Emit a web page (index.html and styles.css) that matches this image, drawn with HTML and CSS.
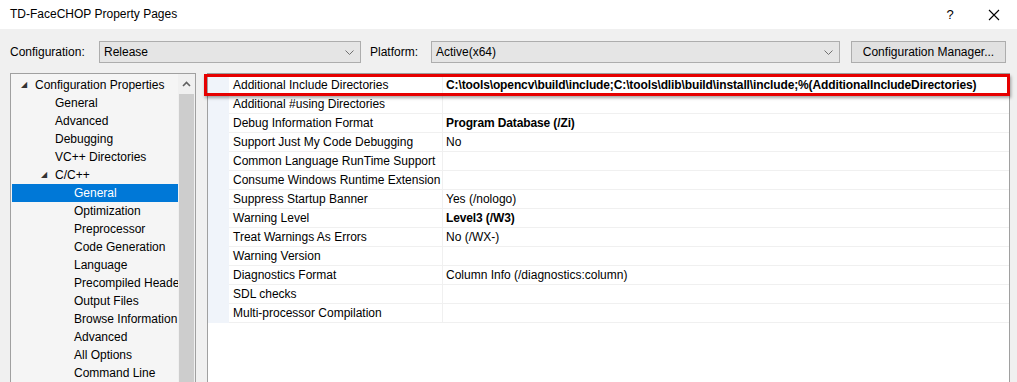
FILE: index.html
```html
<!DOCTYPE html>
<html lang="en">
<head>
    <meta charset="UTF-8">
    <title>TD-FaceCHOP Property Pages</title>
    <link rel="stylesheet" href="styles.css">
</head>
<body>
<div class="window">
    <!-- Title bar -->
    <div class="titlebar">
        <span class="title">TD-FaceCHOP Property Pages</span>
        <span class="help">?</span>
        <span class="close">
            <svg width="12" height="12" viewBox="0 0 12 12"><path d="M1 1 L11 11 M11 1 L1 11" stroke="#000" stroke-width="1.1"/></svg>
        </span>
    </div>

    <!-- Configuration row -->
    <div class="toolbar">
        <label class="lbl lbl-config">Configuration:</label>
        <div class="combo combo-config">
            <span>Release</span>
            <svg class="chev" width="9" height="5" viewBox="0 0 9 5"><path d="M0.5 0.5 L4.5 4.5 L8.5 0.5" fill="none" stroke="#707070" stroke-width="1"/></svg>
        </div>
        <label class="lbl lbl-platform">Platform:</label>
        <div class="combo combo-platform">
            <span>Active(x64)</span>
            <svg class="chev" width="9" height="5" viewBox="0 0 9 5"><path d="M0.5 0.5 L4.5 4.5 L8.5 0.5" fill="none" stroke="#707070" stroke-width="1"/></svg>
        </div>
        <button class="btn-manager">Configuration Manager...</button>
    </div>

    <div class="main">
        <!-- Tree -->
        <div class="tree">
            <div class="tree-items">
                <div class="node lvl0"><span class="tri">&#9698;</span>Configuration Properties</div>
                <div class="node lvl1">General</div>
                <div class="node lvl1">Advanced</div>
                <div class="node lvl1">Debugging</div>
                <div class="node lvl1">VC++ Directories</div>
                <div class="node lvl1 has-tri"><span class="tri">&#9698;</span>C/C++</div>
                <div class="node lvl2 selected">General</div>
                <div class="node lvl2">Optimization</div>
                <div class="node lvl2">Preprocessor</div>
                <div class="node lvl2">Code Generation</div>
                <div class="node lvl2">Language</div>
                <div class="node lvl2">Precompiled Headers</div>
                <div class="node lvl2">Output Files</div>
                <div class="node lvl2">Browse Information</div>
                <div class="node lvl2">Advanced</div>
                <div class="node lvl2">All Options</div>
                <div class="node lvl2">Command Line</div>
            </div>
            <div class="scrollbar">
                <div class="scroll-up">
                    <svg width="9" height="6" viewBox="0 0 9 6"><path d="M1 5 L4.5 1.5 L8 5" fill="none" stroke="#606060" stroke-width="1.6"/></svg>
                </div>
                <div class="thumb"></div>
            </div>
        </div>

        <!-- Property grid -->
        <div class="grid">
            <div class="rows">
                <div class="row"><div class="gutter"></div><div class="name">Additional Include Directories</div><div class="value bold">C:\tools\opencv\build\include;C:\tools\dlib\build\install\include;%(AdditionalIncludeDirectories)</div></div>
                <div class="row"><div class="gutter"></div><div class="name">Additional #using Directories</div><div class="value"></div></div>
                <div class="row"><div class="gutter"></div><div class="name">Debug Information Format</div><div class="value bold">Program Database (/Zi)</div></div>
                <div class="row"><div class="gutter"></div><div class="name">Support Just My Code Debugging</div><div class="value">No</div></div>
                <div class="row"><div class="gutter"></div><div class="name">Common Language RunTime Support</div><div class="value"></div></div>
                <div class="row"><div class="gutter"></div><div class="name">Consume Windows Runtime Extension</div><div class="value"></div></div>
                <div class="row"><div class="gutter"></div><div class="name">Suppress Startup Banner</div><div class="value">Yes (/nologo)</div></div>
                <div class="row"><div class="gutter"></div><div class="name">Warning Level</div><div class="value bold">Level3 (/W3)</div></div>
                <div class="row"><div class="gutter"></div><div class="name">Treat Warnings As Errors</div><div class="value">No (/WX-)</div></div>
                <div class="row"><div class="gutter"></div><div class="name">Warning Version</div><div class="value"></div></div>
                <div class="row"><div class="gutter"></div><div class="name">Diagnostics Format</div><div class="value">Column Info (/diagnostics:column)</div></div>
                <div class="row"><div class="gutter"></div><div class="name">SDL checks</div><div class="value"></div></div>
                <div class="row"><div class="gutter"></div><div class="name">Multi-processor Compilation</div><div class="value"></div></div>
            </div>
            <!-- highlight drawn over the first row -->
            <div class="highlight"></div>
        </div>
    </div>
</div>
</body>
</html>
```

FILE: styles.css
```css
/* Page */
body {
    margin: 0;
    background: #f0f0f0;
    font-family: "Liberation Sans", Arial, sans-serif;
    font-size: 12px;
    color: #000;
    overflow: hidden;
}

.window {
    width: 1017px;
    height: 382px;
    overflow: hidden;
}

/* Title bar */
.titlebar {
    height: 29px;
    background: #fff;
    display: flex;
    align-items: center;
    padding-left: 10px;
}

.title {
    flex: 1;
    font-size: 12px;
    margin-top: -2px;
}

.help {
    width: 42px;
    font-size: 13px;
    text-align: center;
    margin-right: 2px;
}

.close {
    width: 42px;
    display: flex;
    justify-content: center;
    margin-right: 2px;
}

/* Configuration row */
.toolbar {
    display: flex;
    align-items: center;
    height: 22px;
    margin-top: 12px;
    padding-left: 10px;
}

.lbl-config {
    width: 89px;
}

.lbl-platform {
    width: 61px;
    margin-left: 9px;
}

.combo {
    background: #e5e5e5;
    border: 1px solid #adadad;
    display: flex;
    align-items: center;
    justify-content: space-between;
    padding: 0 6px 0 4px;
    box-sizing: border-box;
    height: 22px;
}

.combo-config {
    width: 262px;
}

.combo-platform {
    width: 409px;
}

.btn-manager {
    margin-left: 11px;
    width: 155px;
    height: 22px;
    background: #e1e1e1;
    border: 1px solid #adadad;
    font-family: inherit;
    font-size: 12px;
    padding: 0;
    color: #000;
}

/* Main panels */
.main {
    display: flex;
    margin-top: 10px;
    padding-left: 10px;
    height: 320px;
}

/* Tree */
.tree {
    width: 186px;
    box-sizing: border-box;
    border: 1px solid #a0a0a0;
    border-bottom: none;
    background: #f5f5f5;
    display: flex;
}

.tree-items {
    flex: 1;
    padding-top: 2px;
    padding-left: 1px;
    overflow: hidden;
    white-space: nowrap;
}

.node {
    height: 18px;
    line-height: 18px;
    overflow: hidden;
}

.lvl0 { padding-left: 9px; }
.lvl1 { padding-left: 43px; }
.lvl1.has-tri { padding-left: 29px; }
.lvl2 { padding-left: 62px; }

.tri {
    display: inline-block;
    width: 14px;
    font-size: 8px;
    color: #333;
    vertical-align: top;
}

.selected {
    background: #0078d7;
    color: #fff;
}

.scrollbar {
    width: 17px;
    background: #f0f0f0;
    display: flex;
    flex-direction: column;
}

.scroll-up {
    height: 20px;
    display: flex;
    align-items: center;
    justify-content: center;
}

.thumb {
    flex: 1;
    margin: 0 1px;
    background: #cdcdcd;
}

/* Property grid */
.grid {
    position: relative;
    margin-left: 11px;
    width: 801px;
    border: 1px solid #a0a0a0;
    border-bottom: none;
    background: #fff;
}

.rows {
    padding-top: 2px;
}

.row {
    display: flex;
    height: 19px;
    line-height: 18px;
    white-space: nowrap;
}

.gutter {
    width: 21px;
    background: #f0f4fa;
}

.name {
    width: 214px;
    padding-left: 4px;
    box-sizing: border-box;
    border-right: 1px solid #f0f0f0;
    border-bottom: 1px solid #f0f0f0;
    overflow: hidden;
}

.value {
    flex: 1;
    padding-left: 3px;
    border-bottom: 1px solid #f0f0f0;
    overflow: hidden;
}

.bold {
    font-weight: bold;
    letter-spacing: -0.12px;
}

/* Red box over the first row */
.highlight {
    position: absolute;
    left: -4px;
    top: 0;
    width: 800px;
    height: 16px;
    border: 3px solid #e60000;
    box-shadow: 1px 2px 3px rgba(0, 0, 0, 0.35);
}
```
